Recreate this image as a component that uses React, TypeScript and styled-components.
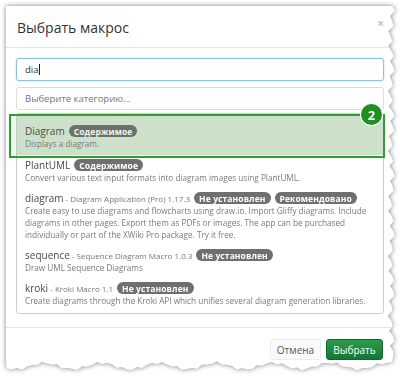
import React from "react";
import styled, { createGlobalStyle } from "styled-components";

const GlobalStyle = createGlobalStyle`
    html, body {
        margin: 0;
        padding: 0;
        background: #fff;
    }
    body {
        font-family: "Open Sans", "Liberation Sans", sans-serif;
        color: #4d4d4d;
    }
`;

type Badge = { label: string };
type Macro = {
    name: string;
    extra?: string;
    badges: Badge[];
    lines: string[];
};

const MACROS: Macro[] = [
    {
        name: "Diagram",
        badges: [{ label: "Содержимое" }],
        lines: ["Displays a diagram."],
    },
    {
        name: "PlantUML",
        badges: [{ label: "Содержимое" }],
        lines: [
            "Convert various text input formats into diagram images using PlantUML.",
        ],
    },
    {
        name: "diagram",
        extra: "Diagram Application (Pro) 1.17.3",
        badges: [{ label: "Не установлен" }, { label: "Рекомендовано" }],
        lines: [
            "Create easy to use diagrams and flowcharts using draw.io. Import Gliffy diagrams. Include",
            "diagrams in other pages. Export them as PDFs or images. The app can be purchased",
            "individually or part of the XWiki Pro package. Try it free.",
        ],
    },
    {
        name: "sequence",
        extra: "Sequence Diagram Macro 1.0.3",
        badges: [{ label: "Не установлен" }],
        lines: ["Draw UML Sequence Diagrams"],
    },
    {
        name: "kroki",
        extra: "Kroki Macro 1.1",
        badges: [{ label: "Не установлен" }],
        lines: [
            "Create diagrams through the Kroki API which unifies several diagram generation libraries.",
        ],
    },
];

// torn paper edge on the right and bottom of the captured dialog
function tornEdge(): string {
    const pts: string[] = ["0px 0px"];
    for (let y = 0; y <= 350; y += 5) {
        const x = 385.5 + 2.6 * Math.sin(y * 0.42) + 1.2 * Math.sin(y * 1.37 + 1);
        pts.push(`${x.toFixed(1)}px ${y}px`);
    }
    for (let x = 386; x >= 0; x -= 5) {
        const y = 360 + 3.2 * Math.sin(x * 0.11 + 0.5) + 1.3 * Math.sin(x * 0.47);
        pts.push(`${x}px ${y.toFixed(1)}px`);
    }
    pts.push("0px 358px");
    return pts.join(", ");
}

const TORN = tornEdge();

function App() {
    return (
        <Page>
            <GlobalStyle />
            <Frame>
                <Modal>
                    <Header>
                        <Title>Выбрать макрос</Title>
                        <Close>×</Close>
                    </Header>
                    <Body>
                        <SearchBox>
                            dia
                            <Caret />
                        </SearchBox>
                        <CategoryBox>Выберите категорию...</CategoryBox>
                        <List>
                            {MACROS.map((m, i) => (
                                <Item key={m.name + i} $selected={i === 0}>
                                    <NameRow>
                                        <Name>{m.name}</Name>
                                        {m.extra && <Extra>&nbsp;- {m.extra}</Extra>}
                                        {m.badges.map((b) => (
                                            <Pill key={b.label}>{b.label}</Pill>
                                        ))}
                                    </NameRow>
                                    {m.lines.map((l) => (
                                        <Desc key={l}>{l}</Desc>
                                    ))}
                                    {i === 0 && (
                                        <Highlight>
                                            <StepBadge>2</StepBadge>
                                        </Highlight>
                                    )}
                                </Item>
                            ))}
                        </List>
                    </Body>
                    <Footer>
                        <CancelButton>Отмена</CancelButton>
                        <SelectButton>Выбрать</SelectButton>
                    </Footer>
                </Modal>
            </Frame>
        </Page>
    );
}

export default App;

const Page = styled.div`
    padding: 6px;
    width: 400px;
    height: 378px;
    box-sizing: border-box;
    overflow: hidden;
`;

const Frame = styled.div`
    width: 390px;
    filter: drop-shadow(0 0 2.5px rgba(0, 0, 0, 0.5));
`;

const Modal = styled.div`
    width: 390px;
    height: 368px;
    background: #fff;
    clip-path: polygon(${TORN});
    display: flex;
    flex-direction: column;
`;

const Header = styled.div`
    height: 41px;
    border-bottom: 1px solid #e5e5e5;
    display: flex;
    align-items: center;
    justify-content: space-between;
    padding: 0 12px 0 11px;
`;

const Title = styled.div`
    font-size: 14px;
    color: #333;
    margin-top: 1px;
`;

const Close = styled.div`
    font-size: 12px;
    color: #c4c4c4;
    font-weight: 700;
    margin-top: -6px;
`;

const Body = styled.div`
    padding: 10px 12px 13px 10px;
    display: flex;
    flex-direction: column;
`;

const Field = styled.div`
    box-sizing: border-box;
    width: 368px;
    height: 23px;
    border-radius: 3px;
    font-size: 9.5px;
    display: flex;
    align-items: center;
    padding-left: 8px;
    background: #fff;
`;

const SearchBox = styled(Field)`
    border: 1px solid #8fc0ea;
    box-shadow: 0 0 2px rgba(102, 175, 233, 0.5);
    color: #333;
    margin-bottom: 6px;
`;

const Caret = styled.span`
    display: inline-block;
    width: 1px;
    height: 11px;
    background: #222;
`;

const CategoryBox = styled(Field)`
    border: 1px solid #dcdcdc;
    color: #777;
    margin-bottom: 3px;
`;

const List = styled.div`
    box-sizing: border-box;
    width: 368px;
    height: 201px;
    border: 1px solid #cfcfcf;
    border-radius: 3px;
    padding-bottom: 3px;
`;

const Item = styled.div<{ $selected: boolean }>`
    position: relative;
    padding: ${(p) => (p.$selected ? "10px 8px 5px" : "3px 8px 4px")};
    background: ${(p) => (p.$selected ? "#dae7d6" : "transparent")};
`;

const NameRow = styled.div`
    display: flex;
    align-items: center;
    height: 14px;
    white-space: nowrap;
`;

const Name = styled.span`
    font-size: 10px;
    color: #4a4a4a;
`;

const Extra = styled.span`
    font-size: 8px;
    color: #777;
`;

const Pill = styled.span`
    display: inline-flex;
    align-items: center;
    height: 12px;
    padding: 0 5px;
    margin-left: 4px;
    border-radius: 6px;
    background: #6f6f6f;
    color: #fff;
    font-size: 8.5px;
    font-weight: 700;
    letter-spacing: 0.1px;
    &:first-of-type {
        margin-left: 9px;
    }
`;

const Desc = styled.div`
    font-size: 8.2px;
    line-height: 12px;
    color: #7a7a7a;
    white-space: nowrap;
`;

const Highlight = styled.div`
    position: absolute;
    top: 0;
    bottom: -3px;
    left: -8px;
    right: -2px;
    border: 2px solid #2e9e2e;
    background: rgba(60, 150, 60, 0.08);
    box-sizing: border-box;
`;

const StepBadge = styled.div`
    position: absolute;
    top: -12px;
    right: 1px;
    width: 21px;
    height: 21px;
    border-radius: 50%;
    background: #1f8f1f;
    color: #fff;
    font-size: 13px;
    font-weight: 700;
    display: flex;
    align-items: center;
    justify-content: center;
    box-shadow: 0 0 0 1px #fff;
`;

const Footer = styled.div`
    border-top: 1px solid #e5e5e5;
    padding: 11px 13px 0 0;
    display: flex;
    justify-content: flex-end;
    gap: 5px;
`;

const Button = styled.div`
    height: 21px;
    box-sizing: border-box;
    border-radius: 3px;
    font-size: 10px;
    display: flex;
    align-items: center;
    justify-content: center;
`;

const CancelButton = styled(Button)`
    width: 51px;
    background: #fafafa;
    border: 1px solid #ececec;
    color: #555;
`;

const SelectButton = styled(Button)`
    width: 57px;
    background: linear-gradient(#2c9b4a, #137734);
    border: 1px solid #11682d;
    color: #fff;
`;
